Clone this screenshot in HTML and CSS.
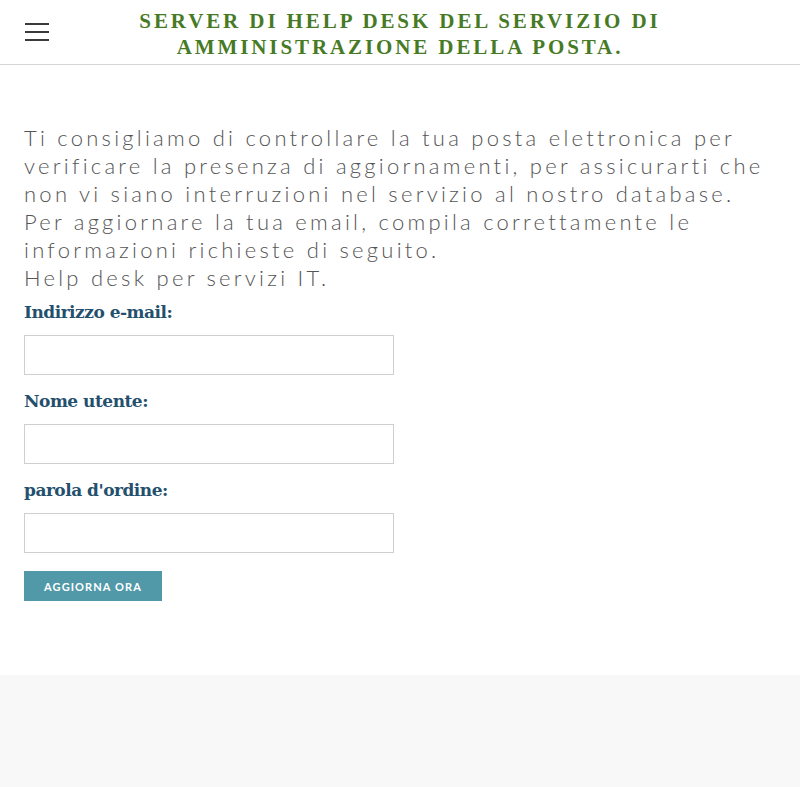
FILE: index.html
```html
<!DOCTYPE html>
<html lang="it">
<head>
<meta charset="utf-8">
<title>Help Desk</title>
<link rel="stylesheet" href="styles.css">
</head>
<body>
<header class="topbar">
  <div class="burger"><span></span><span></span><span></span></div>
  <h1 class="title">SERVER DI HELP DESK DEL SERVIZIO DI AMMINISTRAZIONE DELLA POSTA.</h1>
  <div class="spacer"></div>
</header>
<main class="content">
  <p class="intro">Ti consigliamo di controllare la tua posta elettronica per verificare la presenza di aggiornamenti, per assicurarti che non vi siano interruzioni nel servizio al nostro database.<br>Per aggiornare la tua email, compila correttamente le informazioni richieste di seguito.<br>Help desk per servizi IT.</p>
  <form class="form">
    <label class="lbl">Indirizzo e-mail:</label>
    <input class="field" type="text">
    <label class="lbl">Nome utente:</label>
    <input class="field" type="text">
    <label class="lbl">parola d'ordine:</label>
    <input class="field" type="password">
    <button class="btn" type="button">AGGIORNA ORA</button>
  </form>
</main>
<footer class="foot"></footer>
</body>
</html>
```
FILE: styles.css
```css
html, body { margin: 0; padding: 0; background: #fff; }
.topbar {
  height: 64px;
  border-bottom: 1px solid #d6d6d6;
  display: grid;
  grid-template-columns: 64px 1fr 64px;
  align-items: center;
}
.burger {
  display: flex;
  flex-direction: column;
  gap: 6px;
  padding-left: 25px;
}
.burger span { display: block; width: 24px; height: 2px; background: #3a3a3a; }
.title {
  margin: 0;
  padding: 4px 50px 0;
  text-align: center;
  font-family: "Liberation Serif", serif;
  font-weight: bold;
  font-size: 21px;
  line-height: 26px;
  letter-spacing: 2.9px;
  color: #477a25;
}
.content { padding: 59px 24px 0; min-height: 610px; box-sizing: border-box; }
.intro {
  margin: 0;
  font-family: Lato, sans-serif;
  font-weight: 300;
  font-size: 22px;
  line-height: 28px;
  letter-spacing: 3.25px;
  color: #555;
}
.form { display: flex; flex-direction: column; align-items: flex-start; padding-top: 8px; }
.lbl {
  font-family: "DejaVu Serif", serif;
  font-weight: bold;
  font-size: 17px;
  line-height: 24px;
  letter-spacing: -0.5px;
  color: #24506e;
  margin-bottom: 11px;
}
.field {
  width: 370px;
  height: 40px;
  box-sizing: border-box;
  border: 1px solid #cfcfcf;
  margin: 0 0 14px;
  padding: 0 8px;
}
.field:last-of-type { margin-bottom: 18px; }
.btn {
  width: 138px;
  height: 30px;
  border: 0;
  background: #5199a8;
  color: #fff;
  font-family: Lato, sans-serif;
  font-weight: bold;
  font-size: 11px;
  letter-spacing: 1.1px;
  padding: 0;
}
.foot { height: 112px; background: #f8f8f8; }
```
